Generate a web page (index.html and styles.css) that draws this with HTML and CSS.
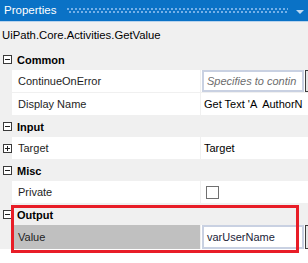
FILE: index.html
```html
<!DOCTYPE html>
<html lang="en">
<head>
    <meta charset="UTF-8">
    <title>Properties</title>
    <link rel="stylesheet" href="styles.css">
</head>
<body>
    <div class="panel">
        <div class="panel-head">
            <span class="panel-title">Properties</span>
            <span class="grip"></span>
            <span class="drop"></span>
        </div>
        <div class="activity">UiPath.Core.Activities.GetValue</div>
        <div class="grid">
            <div class="cat"><span class="toggle minus"></span><span>Common</span></div>
            <div class="prop">
                <div class="name">ContinueOnError</div>
                <div class="val"><div class="box placeholder">Specifies to contin</div><span class="more"></span></div>
            </div>
            <div class="prop">
                <div class="name">Display Name</div>
                <div class="val"><span class="text">Get Text 'A  AuthorN</span></div>
            </div>
            <div class="cat"><span class="toggle minus"></span><span>Input</span></div>
            <div class="prop">
                <span class="toggle plus sub"></span>
                <div class="name">Target</div>
                <div class="val"><span class="text">Target</span></div>
            </div>
            <div class="cat"><span class="toggle minus"></span><span>Misc</span></div>
            <div class="prop">
                <div class="name">Private</div>
                <div class="val"><span class="check"></span></div>
            </div>
            <div class="cat"><span class="toggle minus"></span><span>Output</span></div>
            <div class="prop selected">
                <div class="name">Value</div>
                <div class="val"><div class="box filled">varUserName</div><span class="more"></span></div>
            </div>
        </div>
        <div class="mark"></div>
    </div>
</body>
</html>
```

FILE: styles.css
```css
* {
    margin: 0;
    padding: 0;
    box-sizing: border-box;
}
body {
    font-family: 'Liberation Sans', Arial, sans-serif;
    font-size: 11px;
    color: #1e1e1e;
    background-color: #fff;
    width: 308px;
    height: 263px;
    overflow: hidden;
}
.panel {
    position: relative;
    width: 308px;
}
.panel-head {
    height: 22px;
    background-color: #0a72c6;
    border-bottom: 1px solid #b9d3ec;
    display: flex;
    align-items: center;
    color: #fff;
}
.panel-title {
    padding-left: 4px;
    font-size: 11.5px;
    margin-top: -1px;
}
.grip {
    flex: 1;
    height: 6px;
    margin: 0 8px 0 11px;
    background-image:
        radial-gradient(circle at 1px 1px, #74b0e8 0.8px, transparent 1.1px),
        radial-gradient(circle at 1px 1px, #74b0e8 0.8px, transparent 1.1px);
    background-size: 4px 6px;
    background-position: 0 0, 2px 3px;
}
.drop {
    width: 0;
    height: 0;
    border-left: 4px solid transparent;
    border-right: 4px solid transparent;
    border-top: 4px solid #bcd8f2;
    margin-right: 4px;
    margin-top: 2px;
}
.activity {
    height: 27px;
    line-height: 27px;
    padding-left: 2px;
    font-size: 11.3px;
    background-color: #f0f0f0;
    color: #000;
}
.grid {
    background-color: #f0f0f0;
}
.cat {
    height: 21px;
    display: flex;
    align-items: center;
    font-weight: bold;
    color: #000;
    gap: 5px;
    padding-left: 3px;
}
.toggle {
    width: 9px;
    height: 9px;
    border: 1px solid #3a3a3a;
    background-color: #fff;
    position: relative;
    flex: none;
}
.toggle::before {
    content: '';
    position: absolute;
    left: 1px;
    top: 3px;
    width: 5px;
    height: 1px;
    background-color: #1e1e1e;
}
.toggle.plus::after {
    content: '';
    position: absolute;
    left: 3px;
    top: 1px;
    width: 1px;
    height: 5px;
    background-color: #1e1e1e;
}
.prop {
    height: 23px;
    display: flex;
    padding-left: 12px;
    padding-bottom: 1px;
    position: relative;
}
.prop .sub {
    position: absolute;
    left: 3px;
    top: 7px;
}
.name {
    width: 188px;
    background-color: #fff;
    padding-left: 6px;
    display: flex;
    align-items: center;
}
.val {
    flex: 1;
    margin-left: 1px;
    background-color: #fff;
    display: flex;
    align-items: center;
    padding-left: 3px;
    overflow: hidden;
    white-space: pre;
    color: #000;
}
.prop.selected {
    height: 24px;
    padding-bottom: 0;
}
.prop.selected .name {
    background-color: #c0c0c0;
}
.box {
    flex: 1;
    height: 100%;
    border: 2px solid #c9d1e2;
    display: flex;
    align-items: center;
    padding-left: 3px;
    overflow: hidden;
    margin-left: -2px;
}
.placeholder {
    font-style: italic;
    color: #6d6d6d;
}
.filled {
    color: #1b2438;
}
.more {
    width: 3px;
    height: 100%;
    margin-left: 1px;
    border: 1px solid #3c3c3c;
    border-right: none;
    background-color: #e6e6e6;
    flex: none;
}
.check {
    width: 13px;
    height: 13px;
    border: 1px solid #707070;
    background-color: #fff;
    margin-left: 2px;
    margin-top: 1px;
}
.mark {
    position: absolute;
    left: 11px;
    top: 205px;
    width: 288px;
    height: 48px;
    border: 3px solid #e81d27;
}
```
